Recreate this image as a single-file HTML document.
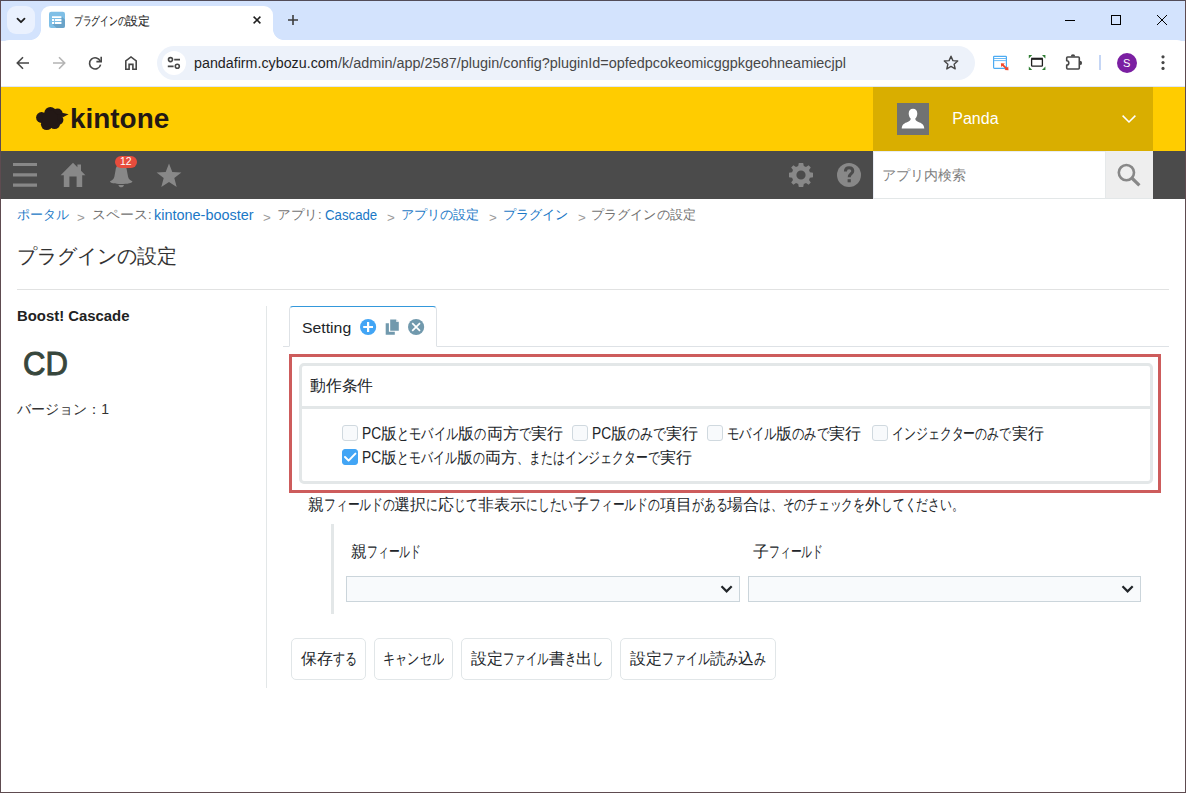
<!DOCTYPE html>
<html lang="ja">
<head>
<meta charset="utf-8">
<title>プラグインの設定</title>
<style>
html,body{margin:0;padding:0;background:#fff;}
body{width:1186px;height:793px;overflow:hidden;font-family:"Liberation Sans",sans-serif;}
#win{position:relative;width:1186px;height:793px;overflow:hidden;background:#fff;font-family:"Liberation Sans",sans-serif;}
#win div,#win svg,#win button,#win input,#win select{position:absolute;box-sizing:border-box;margin:0;padding:0;}
#win button,#win input,#win select{-webkit-appearance:none;appearance:none;outline:0;font-family:"Liberation Sans",sans-serif;}
.t{position:absolute;z-index:4;margin:0;font-weight:normal;white-space:nowrap;transform-origin:0 50%;text-decoration:none;display:block;}
.k{display:inline-block;transform-origin:0 50%;}
.cb{width:16px;height:16px;border:1px solid #d0d9df;background:#f8fafc;border-radius:3px;}
.sel{height:26px;border:1px solid #cbd5db;background:#f8fafc;border-radius:0;}
.btn{border:1px solid #e1e6e8;border-radius:5px;background:#fff;text-align:left;cursor:pointer;}
</style>
</head>
<body>
<div id="win">
<!-- ===== browser chrome ===== -->
<div style="left:0;top:0;width:1186px;height:41px;background:#d3e3fd;"></div>
<div style="left:41px;top:6px;width:232px;height:35px;border-radius:9px 9px 0 0;background:#fff;"></div>
<div style="left:30px;top:29px;width:11px;height:11px;background:radial-gradient(circle at 0 0,#d3e3fd 10.6px,#fff 11.4px);"></div>
<div style="left:273px;top:29px;width:11px;height:11px;background:radial-gradient(circle at 100% 0,#d3e3fd 10.6px,#fff 11.4px);"></div>
<div style="left:7px;top:6px;width:28px;height:28px;border-radius:9px;background:#eaf1fe;"></div>
<div style="left:1px;top:40px;width:1184px;height:46px;background:#fff;border-radius:8px 8px 0 0;"></div>
<div style="left:1px;top:86px;width:1184px;height:1px;background:#dfe7f7;"></div>
<div style="left:157px;top:46px;width:818px;height:34px;border-radius:17px;background:#edf2fa;"></div>
<div style="left:162px;top:51px;width:24px;height:24px;border-radius:12px;background:#fff;"></div>
<div style="left:1099px;top:55px;width:2px;height:15px;background:#c5d6f5;"></div>
<div style="left:1117px;top:52.5px;width:20px;height:20px;border-radius:10px;background:#7b1fa2;"></div>

<!-- ===== kintone header ===== -->
<div style="left:1px;top:87px;width:1184px;height:64px;background:#ffcc00;"></div>
<div style="left:873px;top:87px;width:280px;height:64px;background:#d9ae00;"></div>
<div style="left:897px;top:103px;width:32px;height:32px;background:#717272;"></div>
<div style="left:1px;top:151px;width:1184px;height:48px;background:#4b4b4b;"></div>
<div style="left:873px;top:151px;width:232px;height:48px;background:#fff;border:1px solid #e8ecf4;border-right:0;border-bottom-color:#e3e7e8;"></div>
<div style="left:1105px;top:151px;width:48px;height:48px;background:#eee;border-bottom:1px solid #e3e7e8;border-left:1px solid #e6e9ea;"></div>
<div style="left:115px;top:156px;width:22px;height:12px;border-radius:6px;background:#e74c3c;z-index:3;"></div>

<!-- ===== page ===== -->
<div style="left:17px;top:289px;width:1152px;height:1px;background:#e1e2e2;"></div>
<div style="left:266px;top:306px;width:1px;height:382px;background:#e3e7e8;"></div>
<div style="left:283px;top:346px;width:886px;height:1px;background:#dee2e6;"></div>
<div style="left:289px;top:306px;width:148px;height:41px;background:#fff;border:1px solid #dee2e6;border-top-color:#3498db;border-bottom-color:#fff;border-radius:4px 4px 0 0;"></div>

<div style="left:289px;top:354px;width:872px;height:139px;border:3px solid #cd5c5c;"></div>
<div style="left:299px;top:363px;width:854px;height:121px;border:3px solid #e3e7e8;border-radius:5px;"></div>
<div style="left:302px;top:406px;width:848px;height:3px;background:#e3e7e8;"></div>

<input type="checkbox" class="cb" style="left:342px;top:425px;">
<input type="checkbox" class="cb" style="left:572px;top:425px;">
<input type="checkbox" class="cb" style="left:707px;top:425px;">
<input type="checkbox" class="cb" style="left:872px;top:425px;">
<input type="checkbox" checked class="cb" style="left:342px;top:449px;background:#42a5f5;border-color:#42a5f5;">

<div style="left:331px;top:524px;width:3px;height:90px;background:#e3e7e8;"></div>
<select class="sel" style="left:346px;top:576px;width:394px;"><option></option></select>
<select class="sel" style="left:748px;top:576px;width:393px;"><option></option></select>


<!-- ===== icons ===== -->
<svg id="ic" width="1186" height="793" viewBox="0 0 1186 793" style="left:0;top:0;z-index:2;" fill="none">
 <!-- tab strip -->
 <path d="M17.5 18.7 L21 22.2 L24.5 18.7" stroke="#1f1f1f" stroke-width="1.8" stroke-linecap="round" stroke-linejoin="round"/>
 <rect x="49" y="11.8" width="16" height="16.2" rx="2.2" fill="#7fbfe6"/>
 <path d="M61.4 16.2 L65 19.8 V25.8 Q65 28 62.8 28 H56.6 L52.2 23.9 H61.4 Z" fill="#6aa3c8"/>
 <path d="M52 16.2h9.4v1.7h-9.4z M52 19h2v1.9h-2z M54.9 19h6.5v1.9h-6.5z M52 22.1h2v1.8h-2z M54.9 22.1h6.5v1.8h-6.5z" fill="#fff"/>
 <path d="M253.6 16.6 L260.4 23.4 M260.4 16.6 L253.6 23.4" stroke="#1f1f1f" stroke-width="1.5"/>
 <path d="M288 20 H298 M293 15 V25" stroke="#3c3c3c" stroke-width="1.6"/>
 <path d="M1065 20.5 H1075" stroke="#000" stroke-width="1"/>
 <rect x="1111.5" y="15.5" width="9" height="9" stroke="#000" stroke-width="1"/>
 <path d="M1157 15 L1167 25 M1167 15 L1157 25" stroke="#000" stroke-width="1"/>
 <!-- toolbar -->
 <path d="M29 63 H17.6 M23 57.3 L17.3 63 L23 68.7" stroke="#474747" stroke-width="1.6" stroke-linejoin="miter"/>
 <path d="M53 63 H64.4 M59 57.3 L64.7 63 L59 68.7" stroke="#b4b4b4" stroke-width="1.6"/>
 <path d="M100.3 61.2 A5.6 5.6 0 1 0 100.6 64.6" stroke="#474747" stroke-width="1.6"/>
 <path d="M101.2 56.8 V61.6 H96.4" stroke="#474747" stroke-width="1.6"/>
 <path d="M125.8 69.3 V60.8 L131 56.9 L136.2 60.8 V69.3 H132.9 V64.4 H129.1 V69.3 Z" stroke="#474747" stroke-width="1.6" stroke-linejoin="miter"/>
 <circle cx="170.5" cy="59.6" r="2" stroke="#474747" stroke-width="1.6"/>
 <path d="M174.2 59.6 H180 M167.8 66.3 H173.6" stroke="#474747" stroke-width="1.7"/>
 <circle cx="177.3" cy="66.3" r="2" stroke="#474747" stroke-width="1.6"/>
 <path d="M951 56.2 L952.9 60.6 L957.7 61 L954.1 64.2 L955.2 68.9 L951 66.4 L946.8 68.9 L947.9 64.2 L944.3 61 L949.1 60.6 Z" stroke="#474747" stroke-width="1.4" stroke-linejoin="round"/>
 <!-- ext 1 -->
 <rect x="993.6" y="56.3" width="12.8" height="12" rx="0.8" stroke="#4dabf2" stroke-width="1.2"/>
 <path d="M994 58.5 H1006 M994 60.6 H1006" stroke="#6cbaf5" stroke-width="1"/>
 <path d="M1002.2 64.5 L1007.2 69.1" stroke="#f4472a" stroke-width="1.8"/>
 <path d="M1000.9 63.2 L1004.9 63.5 L1001.2 67 Z M1008.5 70.3 L1004.5 70 L1008.2 66.5 Z" fill="#f4472a"/>
 <!-- ext 2 -->
 <rect x="1031.6" y="58.8" width="10.8" height="7.4" rx="0.8" stroke="#1f1f1f" stroke-width="1.3"/>
 <path d="M1031.2 58.7 H1042.8" stroke="#1f1f1f" stroke-width="2"/>
 <path d="M1028.8 55 h3.4 l-3.4 3.4 Z M1045.4 55 h-3.4 l3.4 3.4 Z M1028.8 70 h3.4 l-3.4 -3.4 Z M1045.4 70 h-3.4 l3.4 -3.4 Z" fill="#2e7d32"/>
 <!-- puzzle -->
 <path d="M1067.6 57 H1078.4 Q1079.3 57 1079.3 57.9 V68.1 Q1079.3 69 1078.4 69 H1067.6 Q1066.7 69 1066.7 68.1 V65 A2.1 2.1 0 0 0 1066.7 60.8 V57.9 Q1066.7 57 1067.6 57 Z" stroke="#474747" stroke-width="1.6" stroke-linejoin="round"/>
 <path d="M1070.8 56.6 A2.2 2.4 0 0 1 1075.2 56.6 Z M1079.7 60.7 A2.4 2.2 0 0 1 1079.7 65.1 Z" fill="#474747"/>
 <circle cx="1163" cy="56.8" r="1.6" fill="#474747"/><circle cx="1163" cy="62.6" r="1.6" fill="#474747"/><circle cx="1163" cy="68.4" r="1.6" fill="#474747"/>

 <!-- kintone cloud -->
 <g fill="#231815">
  <circle cx="41.5" cy="117.5" r="5.4"/><circle cx="50.4" cy="113" r="6.1"/><circle cx="57.6" cy="113.6" r="5"/>
  <circle cx="58.3" cy="119.8" r="5.1"/><circle cx="46.7" cy="124.3" r="5.8"/><circle cx="54.6" cy="123.6" r="5.5"/>
  <circle cx="50" cy="118.5" r="8"/>
  <path d="M61 112.6 L68.6 114.3 L62.4 117.4 Z"/>
 </g>
 <!-- user -->
 <path d="M913 108.7 C915.6 108.7 917.3 110.7 917.3 113.4 C917.3 115.6 916.4 117.5 915.3 118.6 C915.3 120.4 916.2 121.2 918.4 122.1 C921.3 123.2 923.9 124.2 924.3 128.6 H901.7 C902.1 124.2 904.7 123.2 907.6 122.1 C909.8 121.2 910.7 120.4 910.7 118.6 C909.6 117.5 908.7 115.6 908.7 113.4 C908.7 110.7 910.4 108.7 913 108.7 Z" fill="#fff"/>
 <path d="M1122.6 115.6 L1129 122 L1135.4 115.6" stroke="#fff" stroke-width="1.5"/>
 <!-- gray bar icons -->
 <path d="M13 164.5 H37 M13 174.8 H37 M13 185.2 H37" stroke="#888" stroke-width="3.2"/>
 <path d="M73 162.8 L77.4 167.2 V164.5 H81 V170.8 L85.4 175.2 H82.2 V187 H76.6 V176.6 H69.4 V187 H63.8 V175.2 H60.6 Z" fill="#888"/>
 <path d="M121.2 164.6 C117.6 164.6 116 167 115.6 170 L114.4 176.6 C113.9 179 112.2 180.5 110 181.2 C110 183 115 184 121.2 184 C127.4 184 132.4 183 132.4 181.2 C130.2 180.5 128.5 179 128 176.6 L126.8 170 C126.4 167 124.8 164.6 121.2 164.6 Z M118.4 185 H124 C123.6 186.6 122.6 187.3 121.2 187.3 C119.8 187.3 118.8 186.6 118.4 185 Z" fill="#888"/>
 <path d="M169 163.4 L172.3 172 L181.4 172.4 L174.3 178 L176.7 187 L169 182 L161.3 187 L163.7 178 L156.6 172.4 L165.7 172 Z" fill="#888"/>
 <g transform="translate(801 175)" fill="#888">
  <path fill-rule="evenodd" d="M-2.2 -12 H2.2 L2.8 -8.9 L5 -8 L7.6 -9.8 L9.8 -7.6 L8 -5 L8.9 -2.8 L12 -2.2 V2.2 L8.9 2.8 L8 5 L9.8 7.6 L7.6 9.8 L5 8 L2.8 8.9 L2.2 12 H-2.2 L-2.8 8.9 L-5 8 L-7.6 9.8 L-9.8 7.6 L-8 5 L-8.9 2.8 L-12 2.2 V-2.2 L-8.9 -2.8 L-8 -5 L-9.8 -7.6 L-7.6 -9.8 L-5 -8 L-2.8 -8.9 Z M0 -4.6 A4.6 4.6 0 1 0 0 4.6 A4.6 4.6 0 1 0 0 -4.6 Z"/>
 </g>
 <circle cx="849" cy="175" r="12" fill="#888"/>
 <path d="M845.4 171.6 C845.4 169 847 167.8 849.1 167.8 C851.3 167.8 852.8 169.1 852.8 171 C852.8 173.6 849.2 173.8 849.2 177.2" stroke="#4b4b4b" stroke-width="3"/>
 <rect x="847.6" y="179.2" width="3.2" height="3.1" fill="#4b4b4b"/>
 <circle cx="1126.4" cy="172.6" r="7.6" stroke="#888" stroke-width="2.6"/>
 <path d="M1131.8 178 L1139.4 185.4" stroke="#888" stroke-width="3.2"/>

 <!-- tab icons -->
 <circle cx="368.1" cy="327" r="8.1" fill="#42a5f5"/>
 <path d="M363.2 327 H373 M368.1 322.1 V331.9" stroke="#fff" stroke-width="2.2"/>
 <path d="M390.2 319.5 H396 L398.8 322.3 V330.8 H390.2 Z" fill="#7199ad"/>
 <path d="M396.2 319.3 V322.1 H399 Z" fill="#dfe8ed"/>
 <path d="M385.7 323.3 H388.9 V331.7 H394.8 V334.8 H385.7 Z" fill="#7199ad"/>
 <circle cx="416.1" cy="327" r="8.1" fill="#7199ad"/>
 <path d="M412.2 323.1 L420 330.9 M420 323.1 L412.2 330.9" stroke="#fff" stroke-width="1.7"/>
 <!-- checkbox check -->
 <path d="M345 457 L348.6 460.6 L355.4 453.6" stroke="#fff" stroke-width="2" stroke-linecap="round" stroke-linejoin="round"/>
 <!-- select chevrons -->
 <path d="M721.5 586.3 L726.6 591.4 L731.7 586.3" stroke="#212529" stroke-width="2.2"/>
 <path d="M1122.5 586.3 L1127.6 591.4 L1132.7 586.3" stroke="#212529" stroke-width="2.2"/>
</svg>
<div style="left:0;top:0;width:1186px;height:793px;border:1px solid #5e4b50;border-top-color:#524c58;z-index:5;"></div>
<!-- ===== text ===== -->
<span class="t" style="left:73.5px;top:11.6px;font-size:12px;line-height:18px;color:#1f1f1f;-webkit-text-stroke:0.12px #1f1f1f;"><span class="k" style="transform:scaleX(0.729);margin-right:-19.50px">プラグインの</span>設定</span>
<span class="t" style="left:194.4px;top:53.35px;font-size:14px;line-height:20px;color:#1f1f1f;transform:scaleX(1.0196);">pandafirm.cybozu.com</span>
<span class="t" style="left:338px;top:53.35px;font-size:14px;line-height:20px;color:#474747;transform:scaleX(1.0303);">/k/admin/app/2587/plugin/config?pluginId=opfedpcokeomicggpkgeohneamiecjpl</span>
<span class="t" style="left:1123.2px;top:53.62px;font-size:11.5px;line-height:18px;color:#fff;transform:scaleX(0.9646);">S</span>
<span class="t" style="left:70.2px;top:99.44px;font-size:27px;line-height:40px;color:#231815;font-weight:bold;transform:scaleX(1.0332);">kintone</span>
<span class="t" style="left:952.3px;top:107.16px;font-size:16px;line-height:24px;color:#fff;">Panda</span>
<span class="t" style="left:120.2px;top:153.36px;font-size:10.8px;line-height:16px;color:#fff;transform:scaleX(0.9654);">12</span>
<span class="t" style="left:882px;top:165.2px;font-size:14px;line-height:20px;color:#808080;"><span class="k" style="transform:scaleX(1.010);margin-right:0.40px">アプリ</span>内検索</span>
<a class="t" href="#" style="left:17.2px;top:205px;font-size:13px;line-height:20px;color:#1b78c6;">ポータル</a>
<span class="t" style="left:77.4px;top:207.8px;font-size:13px;line-height:20px;color:#9a9a9a;transform:scaleX(1.0272);">&gt;</span>
<span class="t" style="left:92.4px;top:205px;font-size:13px;line-height:20px;color:#727272;"><span class="k" style="transform:scaleX(1.069);margin-right:3.58px">スペース</span>:</span>
<a class="t" href="#" style="left:154px;top:204.95px;font-size:14px;line-height:20px;color:#1b78c6;transform:scaleX(1.0320);">kintone-booster</a>
<span class="t" style="left:262.6px;top:207.8px;font-size:13px;line-height:20px;color:#9a9a9a;transform:scaleX(1.0272);">&gt;</span>
<span class="t" style="left:277.2px;top:205px;font-size:13px;line-height:20px;color:#727272;"><span class="k" style="transform:scaleX(1.046);margin-right:1.78px">アプリ</span>:</span>
<a class="t" href="#" style="left:325.4px;top:204.95px;font-size:14px;line-height:20px;color:#1b78c6;transform:scaleX(0.9445);">Cascade</a>
<span class="t" style="left:387px;top:207.8px;font-size:13px;line-height:20px;color:#9a9a9a;transform:scaleX(1.0272);">&gt;</span>
<a class="t" href="#" style="left:400.6px;top:205px;font-size:13px;line-height:20px;color:#1b78c6;"><span class="k" style="transform:scaleX(1.012);margin-right:0.60px">アプリの</span>設定</a>
<span class="t" style="left:488.8px;top:207.8px;font-size:13px;line-height:20px;color:#9a9a9a;transform:scaleX(1.0272);">&gt;</span>
<a class="t" href="#" style="left:503px;top:205px;font-size:13px;line-height:20px;color:#1b78c6;"><span class="k" style="transform:scaleX(1.009);margin-right:0.60px">プラグイン</span></a>
<span class="t" style="left:578.4px;top:207.8px;font-size:13px;line-height:20px;color:#9a9a9a;transform:scaleX(1.0272);">&gt;</span>
<span class="t" style="left:591.4px;top:205px;font-size:13px;line-height:20px;color:#727272;"><span class="k" style="transform:scaleX(1.008);margin-right:0.60px">プラグインの</span>設定</span>
<h2 class="t" style="left:17px;top:240.6px;font-size:20px;line-height:30px;color:#333;">プラグインの設定</h2>
<h3 class="t" style="left:17.2px;top:305.75px;font-size:14px;line-height:20px;color:#222;font-weight:bold;transform:scaleX(1.0623);">Boost! Cascade</h3>
<span class="t" style="left:22.9px;top:338.86px;font-size:33.6px;line-height:50px;color:#37463c;-webkit-text-stroke:1px #37463c;transform:scaleX(0.9258);">CD</span>
<span class="t" style="left:17.2px;top:399px;font-size:14px;line-height:20px;color:#333;">バージョン：1</span>
<span class="t" style="left:302.4px;top:315.86px;font-size:15.4px;line-height:24px;color:#212529;transform:scaleX(1.0267);">Setting</span>
<span class="t" style="left:310.4px;top:374px;font-size:16px;line-height:24px;color:#212529;transform:scaleX(0.9875);">動作条件</span>
<span class="t" style="left:362.2px;top:422px;font-size:16px;line-height:24px;color:#212529;"><span class="k" style="transform:scaleX(0.860);margin-right:-3.11px">PC</span>版<span class="k" style="transform:scaleX(0.762);margin-right:-19.02px">とモバイル</span>版<span class="k" style="transform:scaleX(0.762);margin-right:-3.80px">の</span>両方<span class="k" style="transform:scaleX(0.762);margin-right:-3.80px">で</span>実行</span>
<span class="t" style="left:592.1px;top:422px;font-size:16px;line-height:24px;color:#212529;"><span class="k" style="transform:scaleX(0.860);margin-right:-3.11px">PC</span>版<span class="k" style="transform:scaleX(0.806);margin-right:-9.32px">のみで</span>実行</span>
<span class="t" style="left:727px;top:422px;font-size:16px;line-height:24px;color:#212529;"><span class="k" style="transform:scaleX(0.771);margin-right:-14.63px">モバイル</span>版<span class="k" style="transform:scaleX(0.771);margin-right:-10.97px">のみで</span>実行</span>
<span class="t" style="left:892.4px;top:422px;font-size:16px;line-height:24px;color:#212529;"><span class="k" style="transform:scaleX(0.744);margin-right:-40.90px">インジェクターのみで</span>実行</span>
<span class="t" style="left:362.2px;top:446.1px;font-size:16px;line-height:24px;color:#212529;"><span class="k" style="transform:scaleX(0.860);margin-right:-3.11px">PC</span>版<span class="k" style="transform:scaleX(0.744);margin-right:-20.51px">とモバイル</span>版<span class="k" style="transform:scaleX(0.744);margin-right:-4.10px">の</span>両方<span class="k" style="transform:scaleX(0.744);margin-right:-49.21px">、またはインジェクターで</span>実行</span>
<span class="t" style="left:307.7px;top:492.5px;font-size:15.5px;line-height:24px;color:#212529;">親<span class="k" style="transform:scaleX(0.736);margin-right:-25.34px">フィールドの</span>選択<span class="k" style="transform:scaleX(0.736);margin-right:-4.22px">に</span>応<span class="k" style="transform:scaleX(0.736);margin-right:-8.45px">じて</span>非表示<span class="k" style="transform:scaleX(0.736);margin-right:-16.89px">にしたい</span>子<span class="k" style="transform:scaleX(0.736);margin-right:-25.34px">フィールドの</span>項目<span class="k" style="transform:scaleX(0.736);margin-right:-12.67px">がある</span>場合<span class="k" style="transform:scaleX(0.736);margin-right:-38.01px">は、そのチェックを</span>外<span class="k" style="transform:scaleX(0.736);margin-right:-29.57px">してください。</span></span>
<span class="t" style="left:350.5px;top:540px;font-size:16px;line-height:24px;color:#212529;">親<span class="k" style="transform:scaleX(0.677);margin-right:-25.80px">フィールド</span></span>
<span class="t" style="left:752.6px;top:540px;font-size:16px;line-height:24px;color:#212529;">子<span class="k" style="transform:scaleX(0.677);margin-right:-25.80px">フィールド</span></span>
<button class="btn" style="left:291px;top:638px;width:75px;height:42px;"><span class="t" style="left:9px;top:7.6px;font-size:16px;line-height:24px;color:#212529;">保存<span class="k" style="transform:scaleX(0.750);margin-right:-8.00px">する</span></span></button>
<button class="btn" style="left:374px;top:638px;width:79px;height:42px;"><span class="t" style="left:7.6px;top:7.6px;font-size:16px;line-height:24px;color:#212529;"><span class="k" style="transform:scaleX(0.762);margin-right:-19.00px">キャンセル</span></span></button>
<button class="btn" style="left:461px;top:638px;width:151px;height:42px;"><span class="t" style="left:9.1px;top:7.6px;font-size:16px;line-height:24px;color:#212529;">設定<span class="k" style="transform:scaleX(0.715);margin-right:-18.27px">ファイル</span>書<span class="k" style="transform:scaleX(0.715);margin-right:-4.57px">き</span>出<span class="k" style="transform:scaleX(0.715);margin-right:-4.57px">し</span></span></button>
<button class="btn" style="left:620px;top:638px;width:156px;height:42px;"><span class="t" style="left:8.7px;top:7.6px;font-size:16px;line-height:24px;color:#212529;">設定<span class="k" style="transform:scaleX(0.753);margin-right:-15.80px">ファイル</span>読<span class="k" style="transform:scaleX(0.753);margin-right:-3.95px">み</span>込<span class="k" style="transform:scaleX(0.753);margin-right:-3.95px">み</span></span></button>
</div>
</body>
</html>
